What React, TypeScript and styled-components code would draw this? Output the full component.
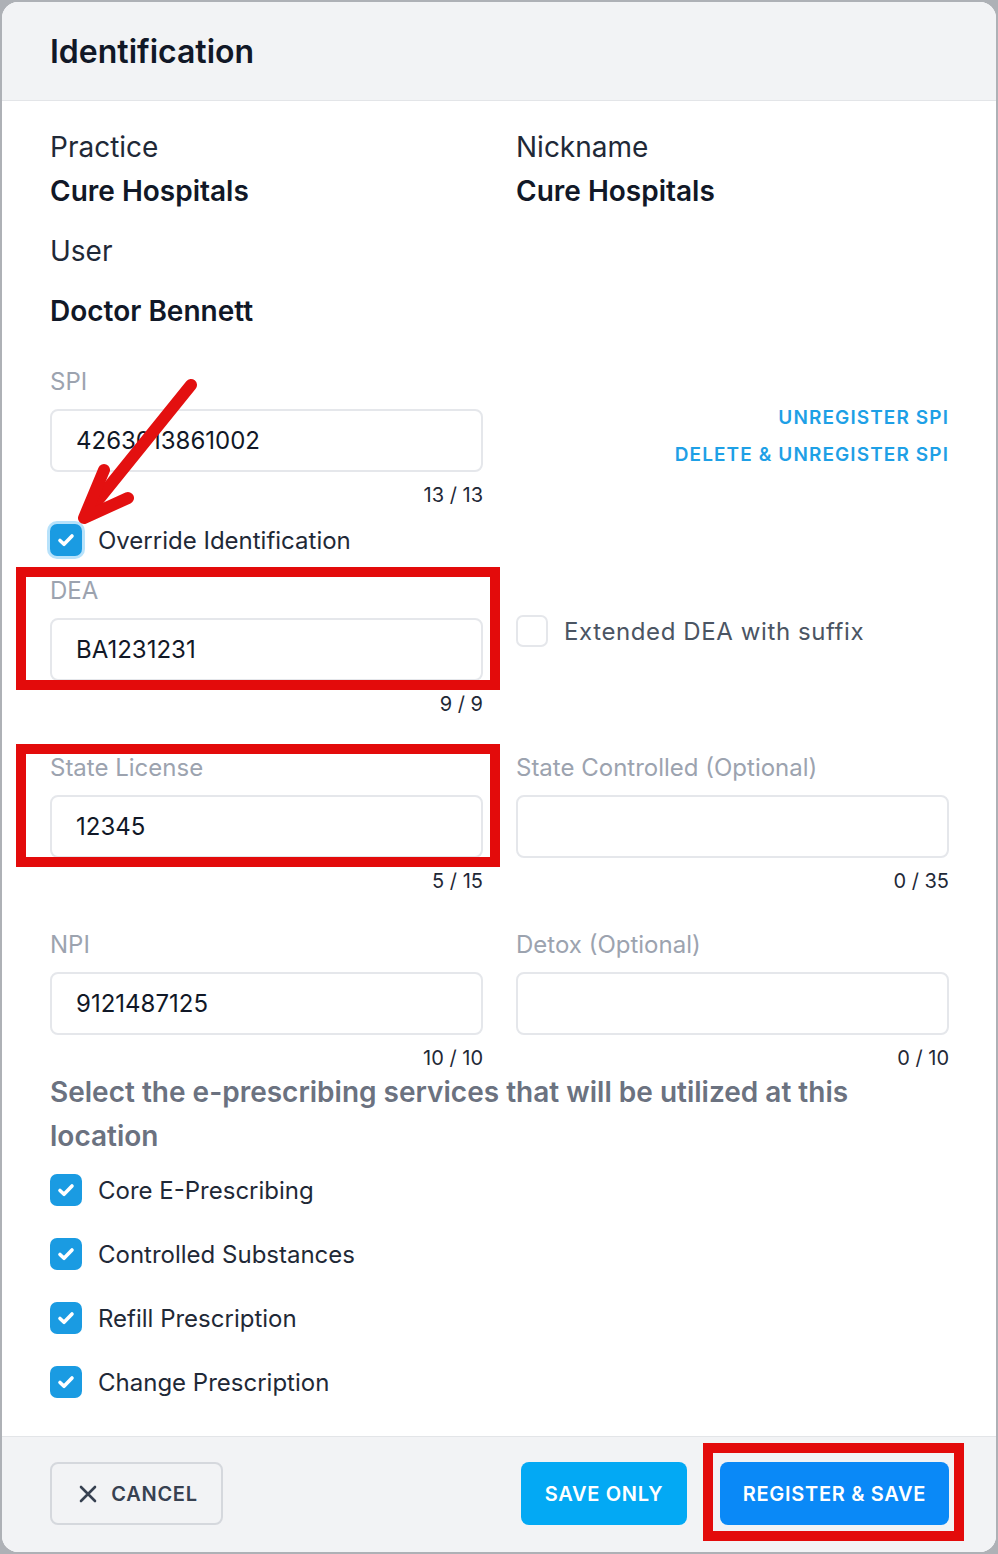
import styled, { createGlobalStyle } from 'styled-components';

const GlobalStyle = createGlobalStyle`
  * {
    box-sizing: border-box;
  }
  body {
    margin: 0;
    background: #aeb1b6;
    font-family: Inter, 'Noto Sans', 'Liberation Sans', sans-serif;
  }
`;

const Page = styled.div`
  position: relative;
  width: 998px;
  height: 1554px;
  padding: 2px;
`;

const Modal = styled.div`
  width: 994px;
  height: 1550px;
  background: #ffffff;
  border-radius: 16px;
  overflow: hidden;
  display: flex;
  flex-direction: column;
`;

const Header = styled.header`
  height: 99px;
  flex: none;
  display: flex;
  align-items: center;
  padding: 0 48px;
  background: #f2f3f5;
  border-bottom: 1px solid #e3e5e8;
  h1 {
    margin: 0;
    font-size: 32px;
    font-weight: 600;
    color: #111827;
  }
`;

const Body = styled.div`
  flex: 1;
  padding: 28px 47px 0 48px;
`;

const Grid = styled.div`
  display: grid;
  grid-template-columns: 433px 433px;
  column-gap: 33px;
`;

const InfoLabel = styled.div`
  font-size: 28px;
  line-height: 36px;
  color: #1f2937;
`;

const InfoValue = styled.div<{ $gap?: number }>`
  font-size: 28px;
  line-height: 36px;
  font-weight: 600;
  color: #111827;
  margin-top: ${({ $gap }) => $gap ?? 8}px;
`;

const UserBlock = styled.div`
  margin-top: 24px;
`;

const FieldCell = styled.div<{ $top: number }>`
  margin-top: ${({ $top }) => $top}px;
`;

const Highlight = styled.div`
  position: relative;
  &::after {
    content: '';
    position: absolute;
    top: -9px;
    bottom: -9px;
    left: -34px;
    right: -17px;
    border: 10px solid #e30b0b;
    pointer-events: none;
  }
`;

const FieldLabel = styled.div`
  font-size: 24px;
  line-height: 30px;
  color: #9ca3af;
  margin-bottom: 12px;
`;

const Input = styled.div`
  height: 63px;
  border: 2px solid #e5e7eb;
  border-radius: 8px;
  padding: 0 24px;
  display: flex;
  align-items: center;
  font-size: 24px;
  color: #111827;
`;

const Counter = styled.div`
  margin-top: 11px;
  text-align: right;
  font-size: 20px;
  line-height: 24px;
  color: #1f2937;
`;

const LinkStack = styled.div`
  display: flex;
  flex-direction: column;
  align-items: flex-end;
  gap: 11px;
  padding-top: 38px;
`;

const TextLink = styled.span`
  font-size: 19px;
  line-height: 26px;
  font-weight: 600;
  letter-spacing: 1.1px;
  color: #1ea0e6;
`;

const CheckRow = styled.label<{ $height?: number }>`
  display: flex;
  align-items: center;
  gap: 16px;
  height: ${({ $height }) => $height ?? 64}px;
`;

const Box = styled.span<{ $checked?: boolean; $focus?: boolean }>`
  flex: none;
  width: 32px;
  height: 32px;
  border-radius: 7px;
  display: flex;
  align-items: center;
  justify-content: center;
  background: ${({ $checked }) => ($checked ? '#1a9be2' : '#ffffff')};
  border: ${({ $checked }) => ($checked ? 'none' : '2px solid #e5e7eb')};
  box-shadow: ${({ $focus }) => ($focus ? '0 0 0 3px #b7e2fb' : 'none')};
`;

const CheckText = styled.span<{ $muted?: boolean }>`
  font-size: 24px;
  color: ${({ $muted }) => ($muted ? '#4b5563' : '#1f2937')};
  letter-spacing: ${({ $muted }) => ($muted ? '0.6px' : '0')};
`;

const OverrideRow = styled.div`
  margin-top: 17px;
`;

const SideCheck = styled.div`
  padding-top: 39px;
`;

const Heading = styled.h2`
  margin: 0;
  font-size: 28px;
  line-height: 44px;
  font-weight: 600;
  color: #6b7280;
`;

const Footer = styled.footer`
  flex: none;
  height: 116px;
  background: #f2f3f5;
  border-top: 1px solid #e3e5e8;
  display: flex;
  align-items: flex-start;
  padding: 25px 47px 0 48px;
`;

const Button = styled.button<{ $variant: 'outline' | 'light' | 'primary' }>`
  height: 63px;
  border-radius: 8px;
  font-family: inherit;
  font-size: 20px;
  font-weight: 600;
  letter-spacing: 0.7px;
  display: flex;
  align-items: center;
  justify-content: center;
  gap: 14px;
  cursor: pointer;
  ${({ $variant }) =>
    $variant === 'outline'
      ? `
    width: 173px;
    padding-left: 10px;
    background: transparent;
    border: 2px solid #d5d8dd;
    color: #374151;
  `
      : $variant === 'light'
      ? `
    width: 166px;
    background: #03a9f4;
    border: none;
    color: #ffffff;
  `
      : `
    width: 229px;
    background: #0a89f7;
    border: none;
    color: #ffffff;
  `}
`;

const Spacer = styled.div`
  flex: 1;
`;

const ButtonGroup = styled.div`
  display: flex;
  gap: 33px;
`;

const Marked = styled.div`
  position: relative;
  &::after {
    content: '';
    position: absolute;
    top: -19px;
    bottom: -16px;
    left: -17px;
    right: -15px;
    border: 10px solid #e30b0b;
    pointer-events: none;
  }
`;

const Arrow = styled.svg`
  position: absolute;
  left: 0;
  top: 0;
  pointer-events: none;
`;

const Check = () => (
  <svg width="20" height="20" viewBox="0 0 20 20" fill="none">
    <path d="M4 10.5l4 3.8 8-8.3" stroke="#fff" strokeWidth="3.6" strokeLinecap="round" strokeLinejoin="round" />
  </svg>
);

type CheckProps = {
  label: string;
  checked?: boolean;
  focus?: boolean;
  muted?: boolean;
  height?: number;
};

const CheckItem = ({ label, checked, focus, muted, height }: CheckProps) => (
  <CheckRow $height={height}>
    <Box $checked={checked} $focus={focus}>
      {checked && <Check />}
    </Box>
    <CheckText $muted={muted}>{label}</CheckText>
  </CheckRow>
);

type FieldProps = {
  label: string;
  value: string;
  count: string;
  highlight?: boolean;
};

const Field = ({ label, value, count, highlight }: FieldProps) => {
  const inner = (
    <>
      <FieldLabel>{label}</FieldLabel>
      <Input>{value}</Input>
    </>
  );
  return (
    <div>
      {highlight ? <Highlight>{inner}</Highlight> : inner}
      <Counter>{count}</Counter>
    </div>
  );
};

const services = ['Core E-Prescribing', 'Controlled Substances', 'Refill Prescription', 'Change Prescription'];

const App = () => {
  return (
    <Page>
      <GlobalStyle />
      <Modal>
        <Header>
          <h1>Identification</h1>
        </Header>
        <Body>
          <Grid>
            <div>
              <InfoLabel>Practice</InfoLabel>
              <InfoValue>Cure Hospitals</InfoValue>
              <UserBlock>
                <InfoLabel>User</InfoLabel>
                <InfoValue $gap={24}>Doctor Bennett</InfoValue>
              </UserBlock>
            </div>
            <div>
              <InfoLabel>Nickname</InfoLabel>
              <InfoValue>Cure Hospitals</InfoValue>
            </div>
          </Grid>

          <Grid>
            <FieldCell $top={38}>
              <Field label="SPI" value="4263013861002" count="13 / 13" />
            </FieldCell>
            <FieldCell $top={38}>
              <LinkStack>
                <TextLink>UNREGISTER SPI</TextLink>
                <TextLink>DELETE &amp; UNREGISTER SPI</TextLink>
              </LinkStack>
            </FieldCell>
          </Grid>

          <OverrideRow>
            <CheckItem label="Override Identification" checked focus height={32} />
          </OverrideRow>

          <Grid>
            <FieldCell $top={20}>
              <Field label="DEA" value="BA1231231" count="9 / 9" highlight />
            </FieldCell>
            <FieldCell $top={20}>
              <SideCheck>
                <CheckItem label="Extended DEA with suffix" muted height={32} />
              </SideCheck>
            </FieldCell>

            <FieldCell $top={37}>
              <Field label="State License" value="12345" count="5 / 15" highlight />
            </FieldCell>
            <FieldCell $top={37}>
              <Field label="State Controlled (Optional)" value="" count="0 / 35" />
            </FieldCell>

            <FieldCell $top={37}>
              <Field label="NPI" value="9121487125" count="10 / 10" />
            </FieldCell>
            <FieldCell $top={37}>
              <Field label="Detox (Optional)" value="" count="0 / 10" />
            </FieldCell>
          </Grid>

          <Heading>Select the e-prescribing services that will be utilized at this location</Heading>
          <div>
            {services.map((s) => (
              <CheckItem key={s} label={s} checked />
            ))}
          </div>
        </Body>
        <Footer>
          <Button $variant="outline">
            <svg width="18" height="18" viewBox="0 0 18 18" fill="none">
              <path d="M2 2l14 14M16 2L2 16" stroke="#374151" strokeWidth="2.6" strokeLinecap="round" />
            </svg>
            CANCEL
          </Button>
          <Spacer />
          <ButtonGroup>
            <Button $variant="light">SAVE ONLY</Button>
            <Marked>
              <Button $variant="primary">REGISTER &amp; SAVE</Button>
            </Marked>
          </ButtonGroup>
        </Footer>
      </Modal>
      <Arrow width="998" height="600" viewBox="0 0 998 600">
        <g stroke="#e31010" strokeWidth="12" strokeLinecap="round" strokeLinejoin="round" fill="none">
          <path d="M191 385L90 510" />
          <path d="M104 470L84 518L128 498" />
        </g>
      </Arrow>
    </Page>
  );
};

export default App;
